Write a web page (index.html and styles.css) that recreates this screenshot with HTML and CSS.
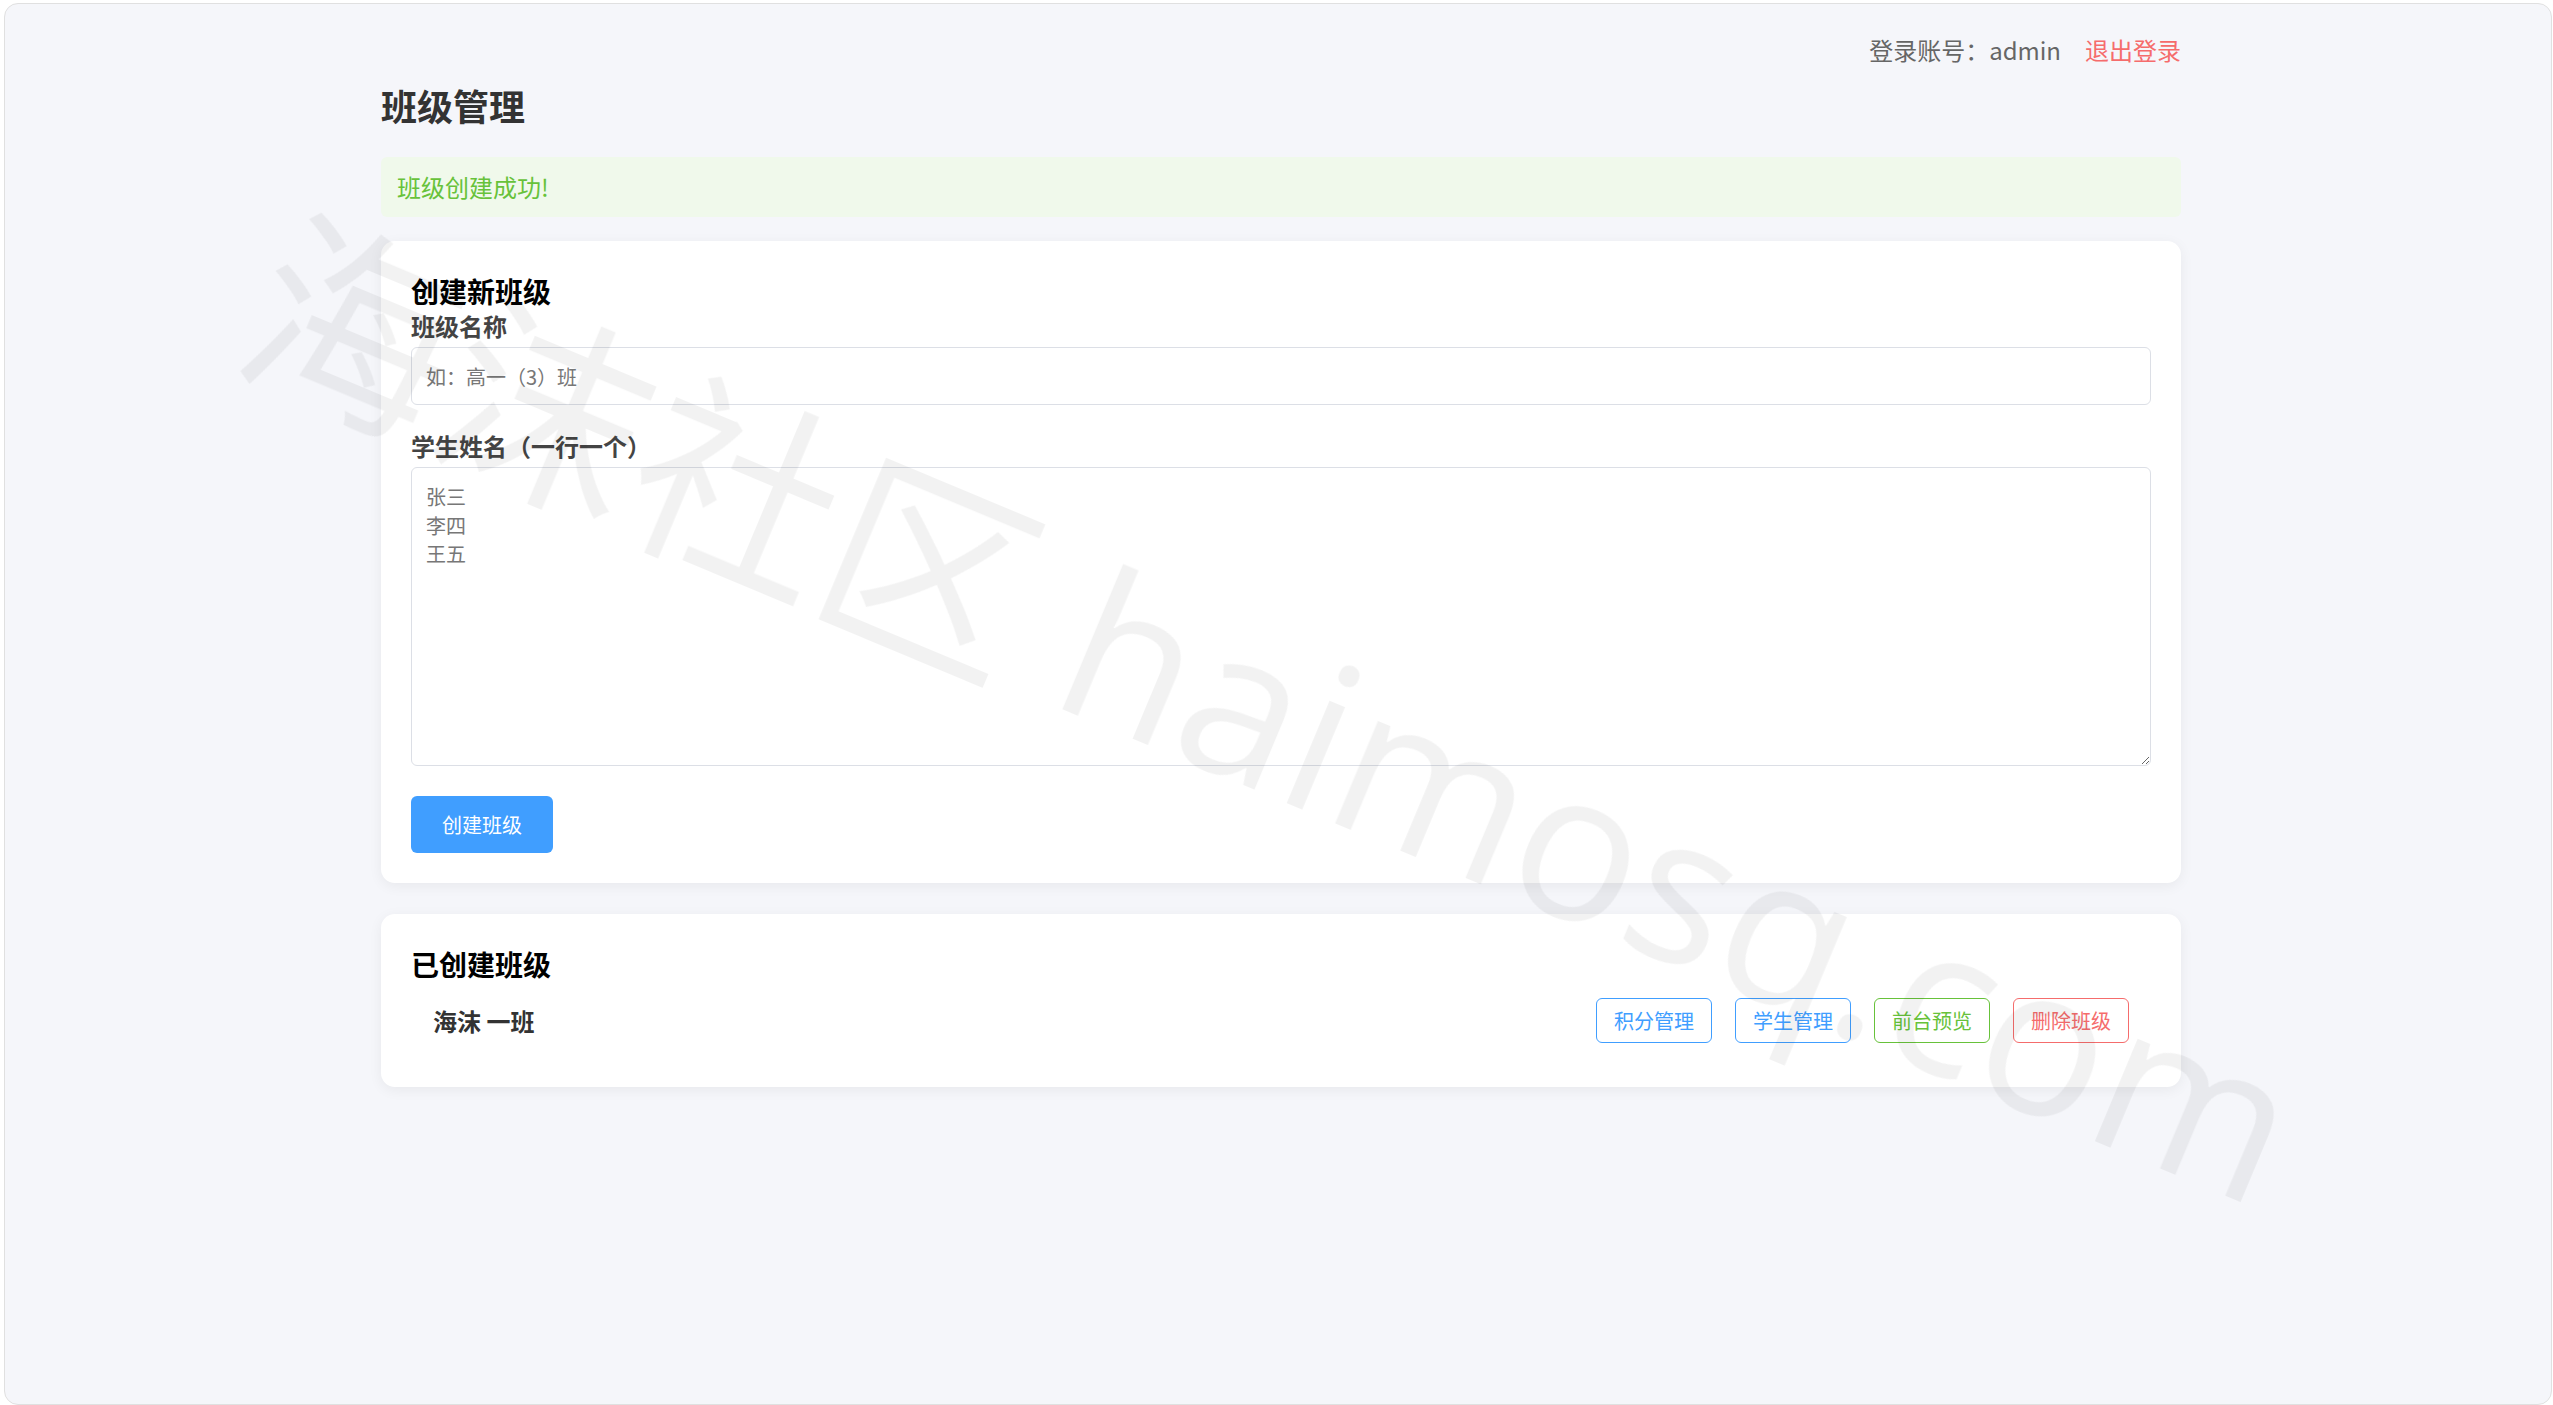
FILE: index.html
```html
<!DOCTYPE html>
<html lang="zh-CN">
<head>
<meta charset="UTF-8">
<meta name="viewport" content="width=device-width, initial-scale=1.0">
<title>班级管理</title>
<link rel="stylesheet" href="styles.css">
</head>
<body>

<!-- Watermark over the whole page -->
<div class="watermark">海沫社区 haimosq.com</div>

<div class="frame">
<div class="container">

<!-- Top Bar with account -->
<div class="top-bar">
<span class="account">登录账号：admin</span>
<a class="logout" href="#">退出登录</a>
</div>

<h2 class="page-title">班级管理</h2>

<div class="alert-success">班级创建成功!</div>

<!-- Create class -->
<div class="card">
<h3>创建新班级</h3>
<label for="className">班级名称</label>
<input type="text" id="className" placeholder="如：高一（3）班">

<label for="studentNames" class="label-gap">学生姓名（一行一个）</label>
<textarea id="studentNames" placeholder="张三&#10;李四&#10;王五"></textarea>

<button class="btn-primary">创建班级</button>
</div>

<!-- Class list -->
<div class="card">
<h3>已创建班级</h3>
<div class="class-item">
<span class="class-name">海沫 一班</span>
<div class="actions">
<button class="btn-outline btn-blue">积分管理</button>
<button class="btn-outline btn-blue">学生管理</button>
<button class="btn-outline btn-green">前台预览</button>
<button class="btn-outline btn-red">删除班级</button>
</div>
</div>
</div>

</div>
</div>

</body>
</html>
```

FILE: styles.css
```css
body {
margin: 0;
background-color: #fff;
font-family: "Noto Sans CJK SC", "Noto Sans", sans-serif;
color: #333;
}


.frame {
box-sizing: border-box;
height: 1402px;
margin: 3px 1px 0 4px;
padding-left: 6px;
background-color: #f5f6fa;
border: 1px solid #e0e0e0;
border-radius: 14px;
overflow: hidden;
}


.container {
max-width: 1800px;
margin: 0 auto;
padding-top: 28px;
}


.top-bar {
display: flex;
justify-content: flex-end;
align-items: center;
font-size: 24px;
line-height: 36px;
}


.account {
color: #666;
}


.logout {
color: #f56c6c;
text-decoration: none;
margin-left: 24px;
}


.page-title {
font-size: 36px;
line-height: 52px;
margin: 11px 0 0;
color: #333;
}


.alert-success {
margin-top: 26px;
padding: 13px 16px;
font-size: 24px;
line-height: 34px;
color: #67c23a;
background-color: #f0f9eb;
border-radius: 6px;
}


.card {
margin-top: 24px;
padding: 32px 30px 30px;
background-color: #fff;
border-radius: 14px;
box-shadow: 0 3px 14px rgba(0, 0, 0, 0.06);
}


.card + .card {
margin-top: 31px;
}


.card h3 {
margin: 0;
font-size: 28px;
line-height: 36px;
color: #000;
}


.card label {
display: block;
font-size: 24px;
line-height: 34px;
font-weight: bold;
color: #444;
}


.card .label-gap {
margin-top: 24px;
}


input, textarea {
display: block;
box-sizing: border-box;
width: 100%;
margin-top: 4px;
padding: 0 14px;
font-family: "Noto Sans CJK SC", sans-serif;
font-size: 20px;
color: #333;
background-color: #fff;
border: 1.5px solid #dcdfe6;
border-radius: 6px;
outline: none;
}


input {
height: 58px;
}


textarea {
height: 299px;
padding-top: 15px;
line-height: 28.5px;
}


input::placeholder, textarea::placeholder {
color: #777;
}


.btn-primary {
margin-top: 30px;
padding: 14px 31px;
font-family: inherit;
font-size: 20px;
line-height: 29px;
color: #fff;
background-color: #409eff;
border: none;
border-radius: 6px;
cursor: pointer;
}


.class-item {
display: flex;
justify-content: space-between;
align-items: center;
padding: 16px 22px 14px;
}


.class-name {
font-size: 24px;
font-weight: bold;
color: #333;
}


.actions {
display: flex;
gap: 23px;
}


.btn-outline {
padding: 7px 17px;
font-family: inherit;
font-size: 20px;
line-height: 29px;
background-color: #fff;
border: 1px solid;
border-radius: 6px;
cursor: pointer;
}


.btn-blue {
color: #409eff;
border-color: #409eff;
}


.btn-green {
color: #67c23a;
border-color: #67c23a;
}


.btn-red {
color: #f56c6c;
border-color: #f56c6c;
}


/* big rotated text laid over everything */
.watermark {
position: fixed;
top: 50%;
left: 50%;
transform: translate(-50%, -50.5%) rotate(22.7deg);
font-family: "Open Sans", "Noto Sans CJK SC", sans-serif;
font-size: 208px;
white-space: nowrap;
color: rgba(0, 0, 0, 0.05);
pointer-events: none;
z-index: 100;
}
```
